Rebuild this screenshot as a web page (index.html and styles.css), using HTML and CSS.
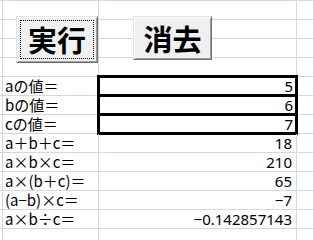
FILE: index.html
```html
<!DOCTYPE html>
<html lang="ja">
<head>
    <meta charset="UTF-8">
    <meta name="viewport" content="width=device-width, initial-scale=1.0">
    <title>計算シート</title>
    <link rel="stylesheet" href="styles.css">
</head>
<body>
    <div class="sheet">
        <div class="row"><div class="cell c0"></div><div class="cell ca"></div><div class="cell cb"></div><div class="cell cc"></div></div>
        <div class="row"><div class="cell c0"></div><div class="cell ca"></div><div class="cell cb"></div><div class="cell cc"></div></div>
        <div class="row"><div class="cell c0"></div><div class="cell ca"></div><div class="cell cb"></div><div class="cell cc"></div></div>
        <div class="row"><div class="cell c0"></div><div class="cell ca"></div><div class="cell cb"></div><div class="cell cc"></div></div>
        <div class="row"><div class="cell c0"></div><div class="cell ca">aの値＝</div><div class="cell cb in" id="val_a">5</div><div class="cell cc"></div></div>
        <div class="row"><div class="cell c0"></div><div class="cell ca">bの値＝</div><div class="cell cb in" id="val_b">6</div><div class="cell cc"></div></div>
        <div class="row"><div class="cell c0"></div><div class="cell ca">cの値＝</div><div class="cell cb in" id="val_c">7</div><div class="cell cc"></div></div>
        <div class="row"><div class="cell c0"></div><div class="cell ca">a＋b＋c＝</div><div class="cell cb">18</div><div class="cell cc"></div></div>
        <div class="row"><div class="cell c0"></div><div class="cell ca">a×b×c＝</div><div class="cell cb">210</div><div class="cell cc"></div></div>
        <div class="row"><div class="cell c0"></div><div class="cell ca">a×(b＋c)＝</div><div class="cell cb">65</div><div class="cell cc"></div></div>
        <div class="row"><div class="cell c0"></div><div class="cell ca">(a−b)×c＝</div><div class="cell cb">−7</div><div class="cell cc"></div></div>
        <div class="row"><div class="cell c0"></div><div class="cell ca">a×b÷c＝</div><div class="cell cb">−0.142857143</div><div class="cell cc"></div></div>
        <div class="row"><div class="cell c0"></div><div class="cell ca"></div><div class="cell cb"></div><div class="cell cc"></div></div>

        <button class="btn btn-run"><span class="focus">実行</span></button>
        <button class="btn btn-clear">消去</button>
    </div>
</body>
</html>
```

FILE: styles.css
```css
* {
    box-sizing: border-box;
}

body {
    margin: 0;
    background: #fff;
    font-family: "Noto Sans CJK JP", sans-serif;
    font-size: 15px;
    color: #000;
    overflow: hidden;
}

.sheet {
    position: relative;
    border-top: 1px solid #d0d7e5;
}

.row {
    display: flex;
    height: 19px;
    border-bottom: 1px solid #d0d7e5;
}

.cell {
    border-right: 1px solid #d0d7e5;
    line-height: 18px;
    white-space: nowrap;
}

.c0 {
    width: 3px;
}

.ca {
    width: 96px;
    padding-left: 2px;
}

.cb {
    width: 198px;
    text-align: right;
    padding-right: 4px;
    font-family: "Noto Sans", "Noto Sans CJK JP", sans-serif;
}

.cc {
    flex: 1;
}

/* input cells with the thick frame */
.in {
    width: 201px;
    margin: -2px -1px -2px -2px;
    border: 3px solid #000;
    line-height: 16px;
    padding-right: 2px;
}

.btn {
    position: absolute;
    top: 15px;
    display: flex;
    align-items: center;
    justify-content: center;
    padding: 0;
    background: #f0f0f0;
    border: 1px solid;
    border-color: #e4e4e4 #6e6e6e #6e6e6e #e4e4e4;
    box-shadow: inset 1px 1px #fff, inset -1px -1px #a0a0a0;
    font-family: "Noto Sans CJK JP", sans-serif;
    font-size: 29px;
    font-weight: bold;
    color: #000;
    line-height: 1;
}

.btn-run {
    left: 16px;
    width: 82px;
    height: 47px;
    padding: 3px;
}

.btn-run .focus {
    flex: 1;
    align-self: stretch;
    display: flex;
    align-items: center;
    justify-content: center;
    border: 1px dotted #000;
}

.btn-clear {
    left: 133px;
    width: 79px;
    height: 44px;
}
```
